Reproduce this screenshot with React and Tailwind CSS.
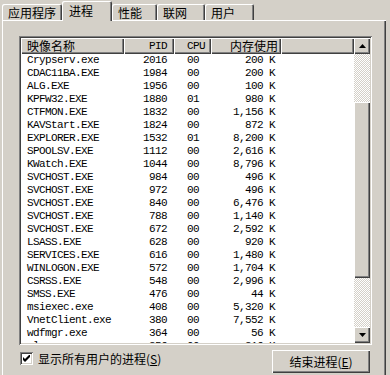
import React from 'react';

const raised = 'bg-[#d4d0c8] shadow-[inset_1px_1px_0_#ffffff,inset_-1px_-1px_0_#404040,inset_-2px_-2px_0_#808080]';
const track = 'bg-[repeating-conic-gradient(#d4d0c8_0_25%,#ffffff_0_50%)] bg-[length:2px_2px]';
const cjk = "font-['Noto_Sans_CJK_SC',sans-serif]";
const mono = "font-['Liberation_Mono',monospace] text-[11px] tracking-[-0.6px]";

const rows = [
  ['Crypserv.exe', '2016', '00', '200 K'],
  ['CDAC11BA.EXE', '1984', '00', '200 K'],
  ['ALG.EXE', '1956', '00', '100 K'],
  ['KPFW32.EXE', '1880', '01', '980 K'],
  ['CTFMON.EXE', '1832', '00', '1,156 K'],
  ['KAVStart.EXE', '1824', '00', '872 K'],
  ['EXPLORER.EXE', '1532', '01', '8,200 K'],
  ['SPOOLSV.EXE', '1112', '00', '2,616 K'],
  ['KWatch.EXE', '1044', '00', '8,796 K'],
  ['SVCHOST.EXE', '984', '00', '496 K'],
  ['SVCHOST.EXE', '972', '00', '496 K'],
  ['SVCHOST.EXE', '840', '00', '6,476 K'],
  ['SVCHOST.EXE', '788', '00', '1,140 K'],
  ['SVCHOST.EXE', '672', '00', '2,592 K'],
  ['LSASS.EXE', '628', '00', '920 K'],
  ['SERVICES.EXE', '616', '00', '1,480 K'],
  ['WINLOGON.EXE', '572', '00', '1,704 K'],
  ['CSRSS.EXE', '548', '00', '2,996 K'],
  ['SMSS.EXE', '476', '00', '44 K'],
  ['msiexec.exe', '408', '00', '5,320 K'],
  ['VnetClient.exe', '380', '00', '7,552 K'],
  ['wdfmgr.exe', '364', '00', '56 K'],
  ['alg.exe', '356', '00', '316 K'],
];

const tabs = [
  { label: '应用程序', w: 'w-[60px]' },
  { label: '进程', w: 'w-[50px]', active: true },
  { label: '性能', w: 'w-[45px]' },
  { label: '联网', w: 'w-[48px]' },
  { label: '用户', w: 'w-[49px]' },
];

const Arrow = ({ down }) => (
  <svg width="7" height="4" viewBox="0 0 7 4">
    <path d={down ? 'M0 0h7L3.5 4z' : 'M3.5 0L7 4H0z'} fill="#000" />
  </svg>
);

const App = () => {
  return (
    <div className={`w-[390px] h-[375px] overflow-hidden bg-[#d4d0c8] text-black text-[12px] ${cjk}`}>
      {/* tab strip */}
      <div className="h-[20px] pl-[2px] flex items-end">
        {tabs.map((t) =>
          t.active ? (
            <div
              key={t.label}
              className={`${t.w} relative z-10 h-[20px] -mb-[1px] bg-[#d4d0c8] rounded-t-[2px] shadow-[inset_1px_1px_0_#ffffff,inset_-1px_0_0_#404040,inset_-2px_0_0_#808080] pl-[7px] leading-[20px]`}
            >
              {t.label}
            </div>
          ) : (
            <div
              key={t.label}
              className={`${t.w} h-[16px] bg-[#d4d0c8] rounded-t-[2px] shadow-[inset_1px_1px_0_#ffffff,inset_-1px_0_0_#404040,inset_-2px_0_0_#808080] pl-[6px] leading-[17px]`}
            >
              {t.label}
            </div>
          )
        )}
      </div>

      {/* panel */}
      <div className="ml-[2px] w-[384px] h-[360px] border-t border-l border-white shadow-[inset_-1px_0_0_#404040,inset_-2px_0_0_#808080] pl-[16px] pt-[15px]">
        {/* list view */}
        <div className="w-[353px] h-[309px] p-[2px] bg-white shadow-[inset_1px_1px_0_#808080,inset_-1px_-1px_0_#ffffff,inset_2px_2px_0_#404040,inset_-2px_-2px_0_#d4d0c8]">
          <div className="h-full flex bg-white">
            <div className="flex-1 flex flex-col overflow-hidden">
              <div className="flex h-[16px] leading-[16px] shrink-0">
                <div className={`w-[103px] pl-[6px] ${raised}`}>映像名称</div>
                <div className={`w-[50px] pr-[7px] text-right ${raised} ${mono}`}>PID</div>
                <div className={`w-[37px] pr-[6px] text-right ${raised} ${mono}`}>CPU</div>
                <div className={`w-[70px] pr-[3px] text-right ${raised}`}>内存使用</div>
                <div className={`flex-1 ${raised}`} />
              </div>
              {rows.map((r, i) => (
                <div key={i} className={`flex h-[13px] leading-[13px] shrink-0 ${mono}`}>
                  <div className="w-[103px] pl-[6px] whitespace-pre">{r[0]}</div>
                  <div className="w-[50px] pr-[7px] text-right">{r[1]}</div>
                  <div className="w-[37px] pr-[12px] text-right">{r[2]}</div>
                  <div className="w-[70px] pr-[6px] text-right whitespace-pre">{r[3]}</div>
                </div>
              ))}
            </div>
            {/* scrollbar */}
            <div className="w-[16px] flex flex-col">
              <div className={`h-[16px] flex items-center justify-center ${raised}`}>
                <Arrow />
              </div>
              <div className={`h-[48px] ${track}`} />
              <div className={`h-[176px] ${raised}`} />
              <div className={`flex-1 ${track}`} />
              <div className={`h-[16px] flex items-center justify-center ${raised}`}>
                <Arrow down />
              </div>
            </div>
          </div>
        </div>

        {/* bottom row */}
        <div className="w-[353px] flex justify-between items-start mt-[5px]">
          <div className="flex items-center gap-[5px] mt-[2px] ml-[1px]">
            <div className="w-[13px] h-[13px] bg-white shadow-[inset_1px_1px_0_#808080,inset_-1px_-1px_0_#ffffff,inset_2px_2px_0_#404040,inset_-2px_-2px_0_#d4d0c8] flex items-center justify-center">
              <svg width="7" height="7" viewBox="0 0 7 7">
                <path d="M0 2v3l2 2 5-5V-1L2 4z" fill="#000" />
              </svg>
            </div>
            <div className="leading-[13px]">
              显示所有用户的进程(<span className="underline">S</span>)
            </div>
          </div>
          <div className={`w-[98px] h-[23px] mr-[2px] flex items-center justify-center ${raised}`}>
            结束进程(<span className="underline">E</span>)
          </div>
        </div>
      </div>
    </div>
  );
};

export default App;
